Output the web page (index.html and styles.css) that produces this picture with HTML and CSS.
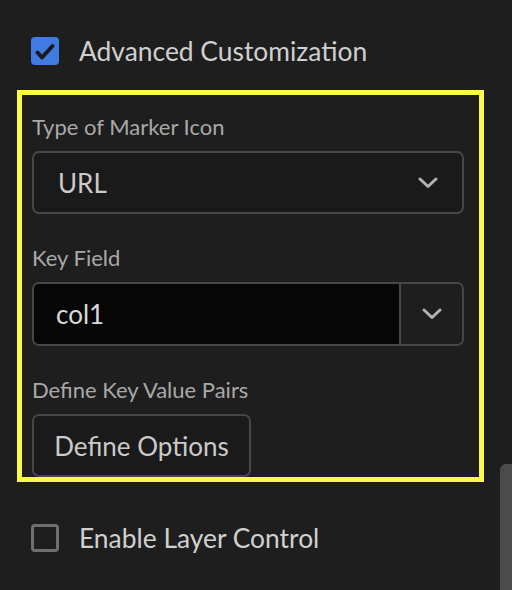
FILE: index.html
```html
<!DOCTYPE html>
<html lang="en">
<head>
<meta charset="utf-8">
<link rel="stylesheet" href="styles.css">
</head>
<body>
<div class="panel">
  <label class="check-row first">
    <span class="box checked">
      <svg width="28" height="28" viewBox="0 0 28 28"><path d="M6.5 15.5 L11 20.5 L21.5 9" fill="none" stroke="#1b1b1b" stroke-width="4" stroke-linecap="round" stroke-linejoin="round"/></svg>
    </span>
    <span class="check-text">Advanced Customization</span>
  </label>

  <div class="highlight">
    <div class="field">
      <div class="label">Type of Marker Icon</div>
      <div class="select">
        <span class="value">URL</span>
        <svg class="chev" width="20" height="12" viewBox="0 0 20 12"><polyline points="2,2 10,9.5 18,2" fill="none" stroke="#b2b2b2" stroke-width="3" stroke-linecap="round" stroke-linejoin="round"/></svg>
      </div>
    </div>
    <div class="field">
      <div class="label">Key Field</div>
      <div class="combo">
        <span class="combo-input">col1</span>
        <span class="combo-btn">
          <svg width="20" height="12" viewBox="0 0 20 12"><polyline points="2,2 10,9.5 18,2" fill="none" stroke="#b2b2b2" stroke-width="3" stroke-linecap="round" stroke-linejoin="round"/></svg>
        </span>
      </div>
    </div>
    <div class="field last">
      <div class="label">Define Key Value Pairs</div>
      <button class="btn">Define Options</button>
    </div>
  </div>

  <label class="check-row second">
    <span class="box"></span>
    <span class="check-text">Enable Layer Control</span>
  </label>
</div>
<div class="scroll-thumb"></div>
</body>
</html>
```

FILE: styles.css
```css
html, body {
  margin: 0;
  padding: 0;
  background: #1e1e1e;
  height: 100%;
  overflow: hidden;
}
body {
  font-family: "Lato", "Liberation Sans", sans-serif;
  color: #cfcfcf;
  position: relative;
}
.panel {
  display: flex;
  flex-direction: column;
  padding-top: 37px;
}
.check-row {
  display: flex;
  align-items: center;
  gap: 20px;
  padding-left: 31px;
  height: 28px;
}
.box {
  width: 28px;
  height: 28px;
  box-sizing: border-box;
  border: 3px solid #6f6f6f;
  border-radius: 4px;
  display: flex;
}
.box.checked {
  background: #3f7be2;
  border: none;
}
.check-text {
  font-size: 26.4px;
  color: #d0d0d0;
  line-height: 28px;
}
.highlight {
  margin-top: 25px;
  margin-left: 17px;
  width: 467px;
  box-sizing: border-box;
  border: 5px solid #fdf94a;
  padding: 18px 15px 0 10px;
  display: flex;
  flex-direction: column;
  gap: 30px;
}
.field {
  display: flex;
  flex-direction: column;
  gap: 10px;
}
.label {
  font-size: 22px;
  line-height: 28px;
  color: #a9a9a9;
}
.select {
  height: 63px;
  box-sizing: border-box;
  border: 2px solid #474747;
  border-radius: 7px;
  background: #1a1a1a;
  display: flex;
  align-items: center;
  justify-content: space-between;
  padding: 0 24px 0 24px;
}
.value {
  font-size: 26px;
  color: #cacaca;
}
.combo {
  height: 64px;
  display: flex;
  box-sizing: border-box;
  border: 2px solid #474747;
  border-radius: 7px;
  overflow: hidden;
}
.combo-input {
  flex: 1;
  background: #070707;
  display: flex;
  align-items: center;
  padding-left: 22px;
  font-size: 26px;
  color: #dadada;
}
.combo-btn {
  width: 61px;
  border-left: 2px solid #474747;
  background: #1e1e1e;
  display: flex;
  align-items: center;
  justify-content: center;
}
.btn {
  align-self: flex-start;
  height: 63px;
  width: 219px;
  box-sizing: border-box;
  border: 2px solid #474747;
  border-radius: 7px;
  background: #1a1a1a;
  font-family: inherit;
  font-size: 26px;
  color: #cacaca;
  padding: 0;
}
.check-row.second {
  margin-top: 42px;
}
.scroll-thumb {
  position: absolute;
  left: 500px;
  top: 464px;
  width: 12px;
  height: 140px;
  background: #4b4b4b;
  border-radius: 6px 0 0 0;
}
```
